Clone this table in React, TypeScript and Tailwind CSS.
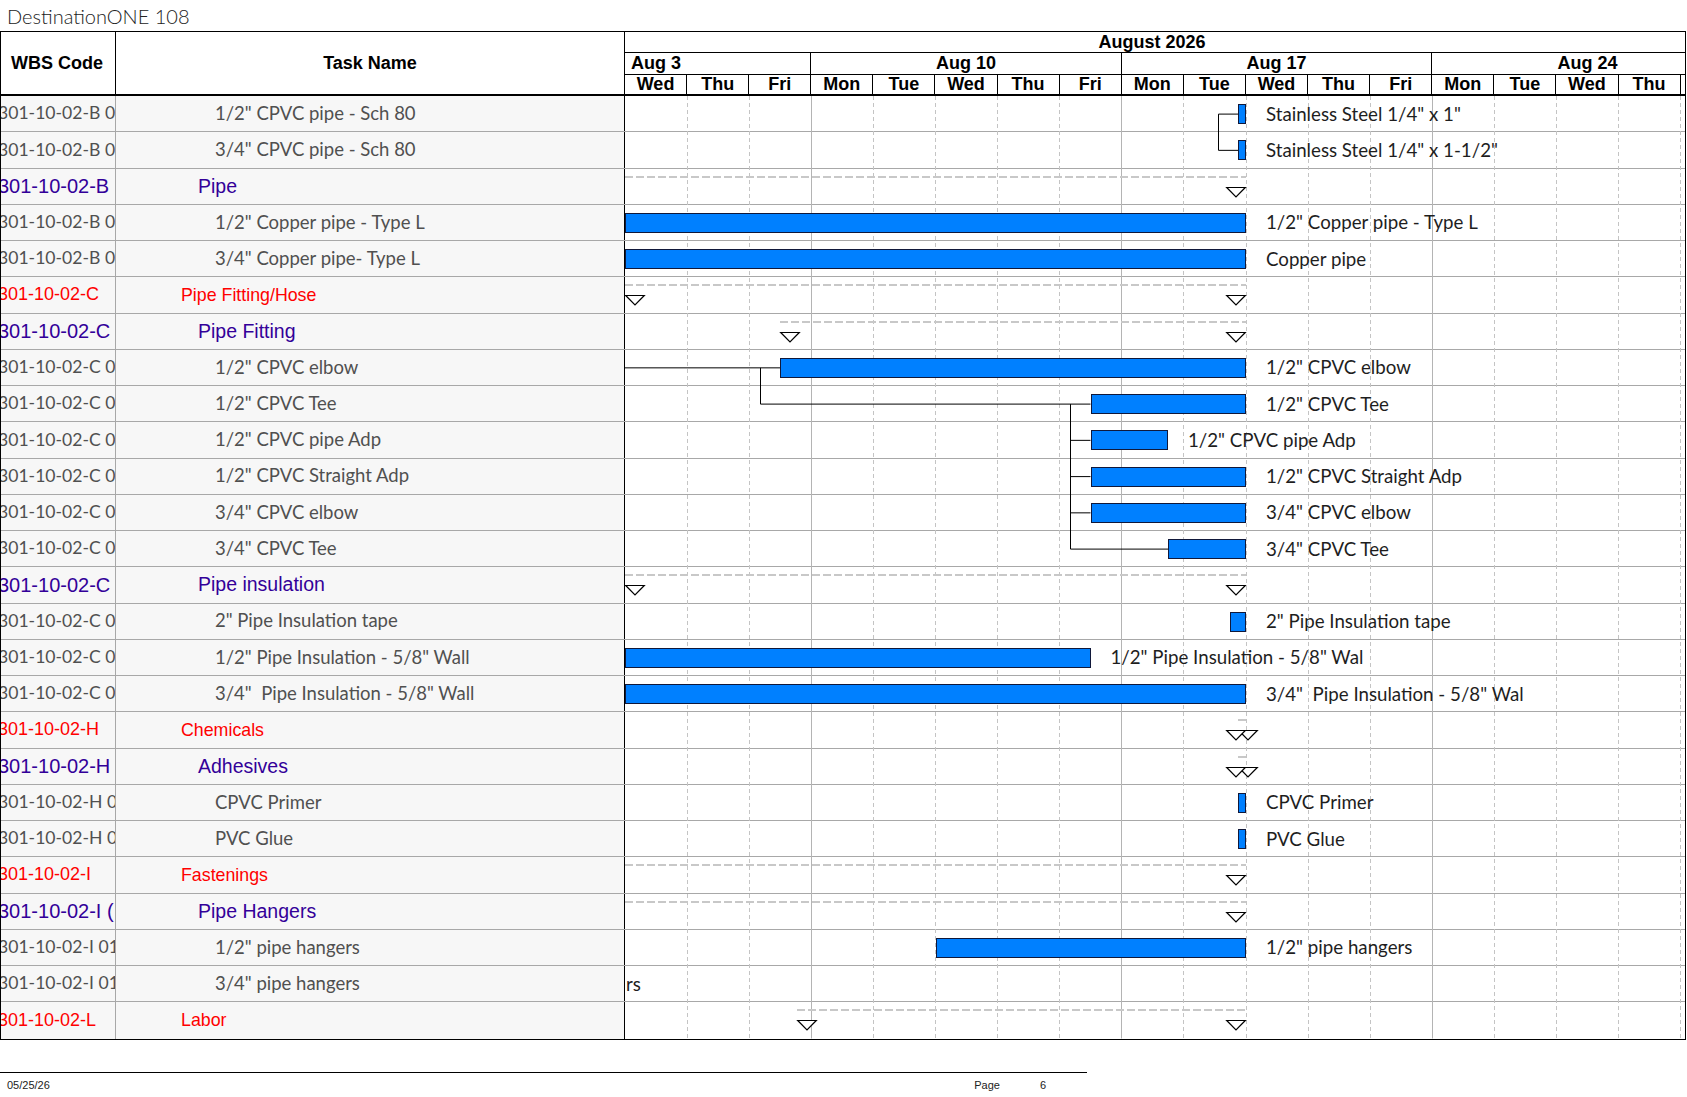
import React from "react";

type Row = {
  w: string;
  n: string;
  l: 1 | 2 | 3;
  b?: [number, number];
  t?: string;
  s?: [number, number];
  st?: boolean;
  t0?: string;
};

const DAY = 62.1;
const ROW_H = 36.25;

const rows: Row[] = [
  { w: "301-10-02-B 0", n: '1/2" CPVC pipe - Sch 80', l: 3, b: [613, 621], t: 'Stainless Steel 1/4" x 1"' },
  { w: "301-10-02-B 0", n: '3/4" CPVC pipe - Sch 80', l: 3, b: [613, 621], t: 'Stainless Steel 1/4" x 1-1/2"' },
  { w: "301-10-02-B", n: "Pipe", l: 2, s: [0, 621], st: false },
  { w: "301-10-02-B 0", n: '1/2" Copper pipe - Type L', l: 3, b: [0, 621], t: '1/2" Copper pipe - Type L' },
  { w: "301-10-02-B 0", n: '3/4" Copper pipe- Type L', l: 3, b: [0, 621], t: "Copper pipe" },
  { w: "301-10-02-C", n: "Pipe Fitting/Hose", l: 1, s: [0, 621], st: true },
  { w: "301-10-02-C", n: "Pipe Fitting", l: 2, s: [155, 621], st: true },
  { w: "301-10-02-C 0", n: '1/2" CPVC elbow', l: 3, b: [155, 621], t: '1/2" CPVC elbow' },
  { w: "301-10-02-C 0", n: '1/2" CPVC Tee', l: 3, b: [465.5, 621], t: '1/2" CPVC Tee' },
  { w: "301-10-02-C 0", n: '1/2" CPVC pipe Adp', l: 3, b: [465.5, 543], t: '1/2" CPVC pipe Adp' },
  { w: "301-10-02-C 0", n: '1/2" CPVC Straight Adp', l: 3, b: [465.5, 621], t: '1/2" CPVC Straight Adp' },
  { w: "301-10-02-C 0", n: '3/4" CPVC elbow', l: 3, b: [465.5, 621], t: '3/4" CPVC elbow' },
  { w: "301-10-02-C 0", n: '3/4" CPVC Tee', l: 3, b: [543, 621], t: '3/4" CPVC Tee' },
  { w: "301-10-02-C", n: "Pipe insulation", l: 2, s: [0, 621], st: true },
  { w: "301-10-02-C 0", n: '2" Pipe Insulation tape', l: 3, b: [605, 621], t: '2" Pipe Insulation tape' },
  { w: "301-10-02-C 0", n: '1/2" Pipe Insulation - 5/8" Wall', l: 3, b: [0, 465.5], t: '1/2" Pipe Insulation - 5/8" Wal' },
  { w: "301-10-02-C 0", n: '3/4"  Pipe Insulation - 5/8" Wall', l: 3, b: [0, 621], t: '3/4"  Pipe Insulation - 5/8" Wal' },
  { w: "301-10-02-H", n: "Chemicals", l: 1, s: [613, 621], st: true },
  { w: "301-10-02-H", n: "Adhesives", l: 2, s: [613, 621], st: true },
  { w: "301-10-02-H 0", n: "CPVC Primer", l: 3, b: [613, 621], t: "CPVC Primer" },
  { w: "301-10-02-H 0", n: "PVC Glue", l: 3, b: [613, 621], t: "PVC Glue" },
  { w: "301-10-02-I", n: "Fastenings", l: 1, s: [0, 621], st: false },
  { w: "301-10-02-I (", n: "Pipe Hangers", l: 2, s: [0, 621], st: false },
  { w: "301-10-02-I 01", n: '1/2" pipe hangers', l: 3, b: [310.5, 621], t: '1/2" pipe hangers' },
  { w: "301-10-02-I 01", n: '3/4" pipe hangers', l: 3, t0: "rs" },
  { w: "301-10-02-L", n: "Labor", l: 1, s: [172, 621], st: true },
];

const days = ["Wed", "Thu", "Fri", "Mon", "Tue", "Wed", "Thu", "Fri", "Mon", "Tue", "Wed", "Thu", "Fri", "Mon", "Tue", "Wed", "Thu", ""];

function Tri({ x }: { x: number }) {
  return <polygon points={`${x + 0.7},18.5 ${x + 19.3},18.5 ${x + 10},28`} fill="white" stroke="#000" strokeWidth={1.2} />;
}

function ChartCell({ r }: { r: Row }) {
  return (
    <div className="relative w-[1060px] shrink-0 overflow-hidden">
      {r.s && (
        <svg className="absolute left-0 top-0" width={1060} height={36}>
          <line x1={r.s[0]} x2={r.s[1]} y1={8} y2={8} stroke="#c8c8c8" strokeWidth={2} strokeDasharray="8 3" />
          {r.st && <Tri x={r.s[0]} />}
          <Tri x={r.s[1] - 20} />
        </svg>
      )}
      {r.b && (
        <div
          className="absolute top-[8px] h-[20px] border border-[#10183a] bg-[#0080ff]"
          style={{ left: r.b[0], width: r.b[1] - r.b[0] }}
        />
      )}
      {r.b && r.t && (
        <div
          className="absolute top-0 flex h-full items-center whitespace-pre font-['Lato',sans-serif] text-[18.7px] text-[#1e1e1e]"
          style={{ left: r.b[1] + 20 }}
        >
          {r.t}
        </div>
      )}
      {r.t0 && (
        <div className="absolute left-[1px] top-0 flex h-full items-center font-['Lato',sans-serif] text-[18.7px] text-[#1e1e1e]">
          {r.t0}
        </div>
      )}
    </div>
  );
}

function BodyRow({ r, last }: { r: Row; last: boolean }) {
  const wbsCls =
    r.l === 1
      ? "ml-[-3px] font-['Liberation_Sans',Arial,sans-serif] text-[18px] text-[#ff0000]"
      : r.l === 2
      ? "ml-[-3px] font-['Liberation_Sans',Arial,sans-serif] text-[20px] text-[#330099]"
      : "ml-[-3px] font-['Lato',sans-serif] text-[17.6px] text-[#505050]";
  const nameCls =
    r.l === 1
      ? "pl-[65px] font-['Liberation_Sans',Arial,sans-serif] text-[17.8px] text-[#ff0000]"
      : r.l === 2
      ? "pl-[82px] font-['Liberation_Sans',Arial,sans-serif] text-[19.5px] text-[#330099]"
      : "pl-[99px] font-['Lato',sans-serif] text-[18.5px] text-[#505050]";
  return (
    <div className={`flex h-[36.25px] ${last ? "" : "border-b border-[#a8a8a8]"}`}>
      <div className="flex w-[115px] shrink-0 items-center overflow-hidden border-r border-[#a8a8a8] bg-[#f7f7f7]">
        <span className={`whitespace-nowrap ${wbsCls}`}>{r.w}</span>
      </div>
      <div className="flex w-[509px] shrink-0 items-center overflow-hidden border-r border-black bg-[#f7f7f7]">
        <span className={`whitespace-pre ${nameCls}`}>{r.n}</span>
      </div>
      <ChartCell r={r} />
    </div>
  );
}

export default function App() {
  const c = (i: number) => i * ROW_H + 18.1;
  const gridLines = Array.from({ length: 17 }, (_, k) => k + 1);
  const bodyH = rows.length * ROW_H;
  return (
    <div className="relative h-[1097px] w-[1687px] overflow-hidden bg-white text-black">
      <div className="flex h-[31px] items-center pl-[7px] font-['Lato',sans-serif] text-[20px] font-light text-[#222]">
        DestinationONE 108
      </div>
      <div className="w-[1686px] border-l border-r border-black">
        {/* header */}
        <div className="flex h-[65px] border-b-2 border-t border-black font-['Liberation_Sans',Arial,sans-serif] font-bold">
          <div className="flex w-[115px] shrink-0 items-center border-r border-black pl-[10px] text-[18px]">WBS Code</div>
          <div className="flex w-[509px] shrink-0 items-center justify-center border-r border-black text-[18px]">Task Name</div>
          <div className="flex w-[1060px] shrink-0 flex-col overflow-hidden text-[18px]">
            <div className="flex h-[21px] items-center justify-center border-b border-black pr-[6px]">August 2026</div>
            <div className="flex h-[22px] border-b border-black">
              <div className="flex w-[186.3px] shrink-0 items-center border-r border-black pl-[6px]">Aug 3</div>
              <div className="flex w-[310.5px] shrink-0 items-center justify-center border-r border-black">Aug 10</div>
              <div className="flex w-[310.5px] shrink-0 items-center justify-center border-r border-black">Aug 17</div>
              <div className="flex w-[310.5px] shrink-0 items-center justify-center">Aug 24</div>
            </div>
            <div className="flex h-[19px]">
              {days.map((d, i) => (
                <div key={i} className="flex w-[62.1px] shrink-0 items-center justify-center border-r border-black">
                  {d}
                </div>
              ))}
            </div>
          </div>
        </div>
        {/* body */}
        <div className="relative border-b border-black">
          <svg className="absolute left-[624px] top-0" width={1060} height={bodyH}>
            {gridLines.map((i) => {
              const x = Math.round(i * DAY - 0.5) + 0.5;
              const week = i === 3 || i === 8 || i === 13;
              return week ? (
                <line key={i} x1={x} x2={x} y1={0} y2={bodyH} stroke="#b4b4b4" strokeWidth={1} />
              ) : (
                <line key={i} x1={x} x2={x} y1={0} y2={bodyH} stroke="#c4c4c4" strokeWidth={1} strokeDasharray="4 3" />
              );
            })}
          </svg>
          {rows.map((r, i) => (
            <BodyRow key={i} r={r} last={i === rows.length - 1} />
          ))}
          <svg className="pointer-events-none absolute left-[624px] top-0" width={1060} height={bodyH}>
            <g stroke="#000" strokeWidth={1} fill="none">
              <path d={`M593.5,${c(0)} H613 M593.5,${c(0)} V${c(1)} H613`} />
              <path d={`M0,${c(7)} H155 M135.5,${c(7)} V${c(8)} H465.5`} />
              <path
                d={`M445.5,${c(8)} V${c(12)} H543 M445.5,${c(9)} H465.5 M445.5,${c(10)} H465.5 M445.5,${c(11)} H465.5`}
              />
            </g>
          </svg>
        </div>
      </div>
      {/* footer */}
      <div className="mt-[32px] w-[1087px] border-t border-black">
        <div className="flex h-[26px] items-center font-['Liberation_Sans_Narrow','Liberation_Sans',Arial,sans-serif] text-[11px] text-[#222]">
          <span className="ml-[7px]">05/25/26</span>
          <span className="ml-auto">Page</span>
          <span className="ml-[40px] mr-[41px]">6</span>
        </div>
      </div>
    </div>
  );
}
